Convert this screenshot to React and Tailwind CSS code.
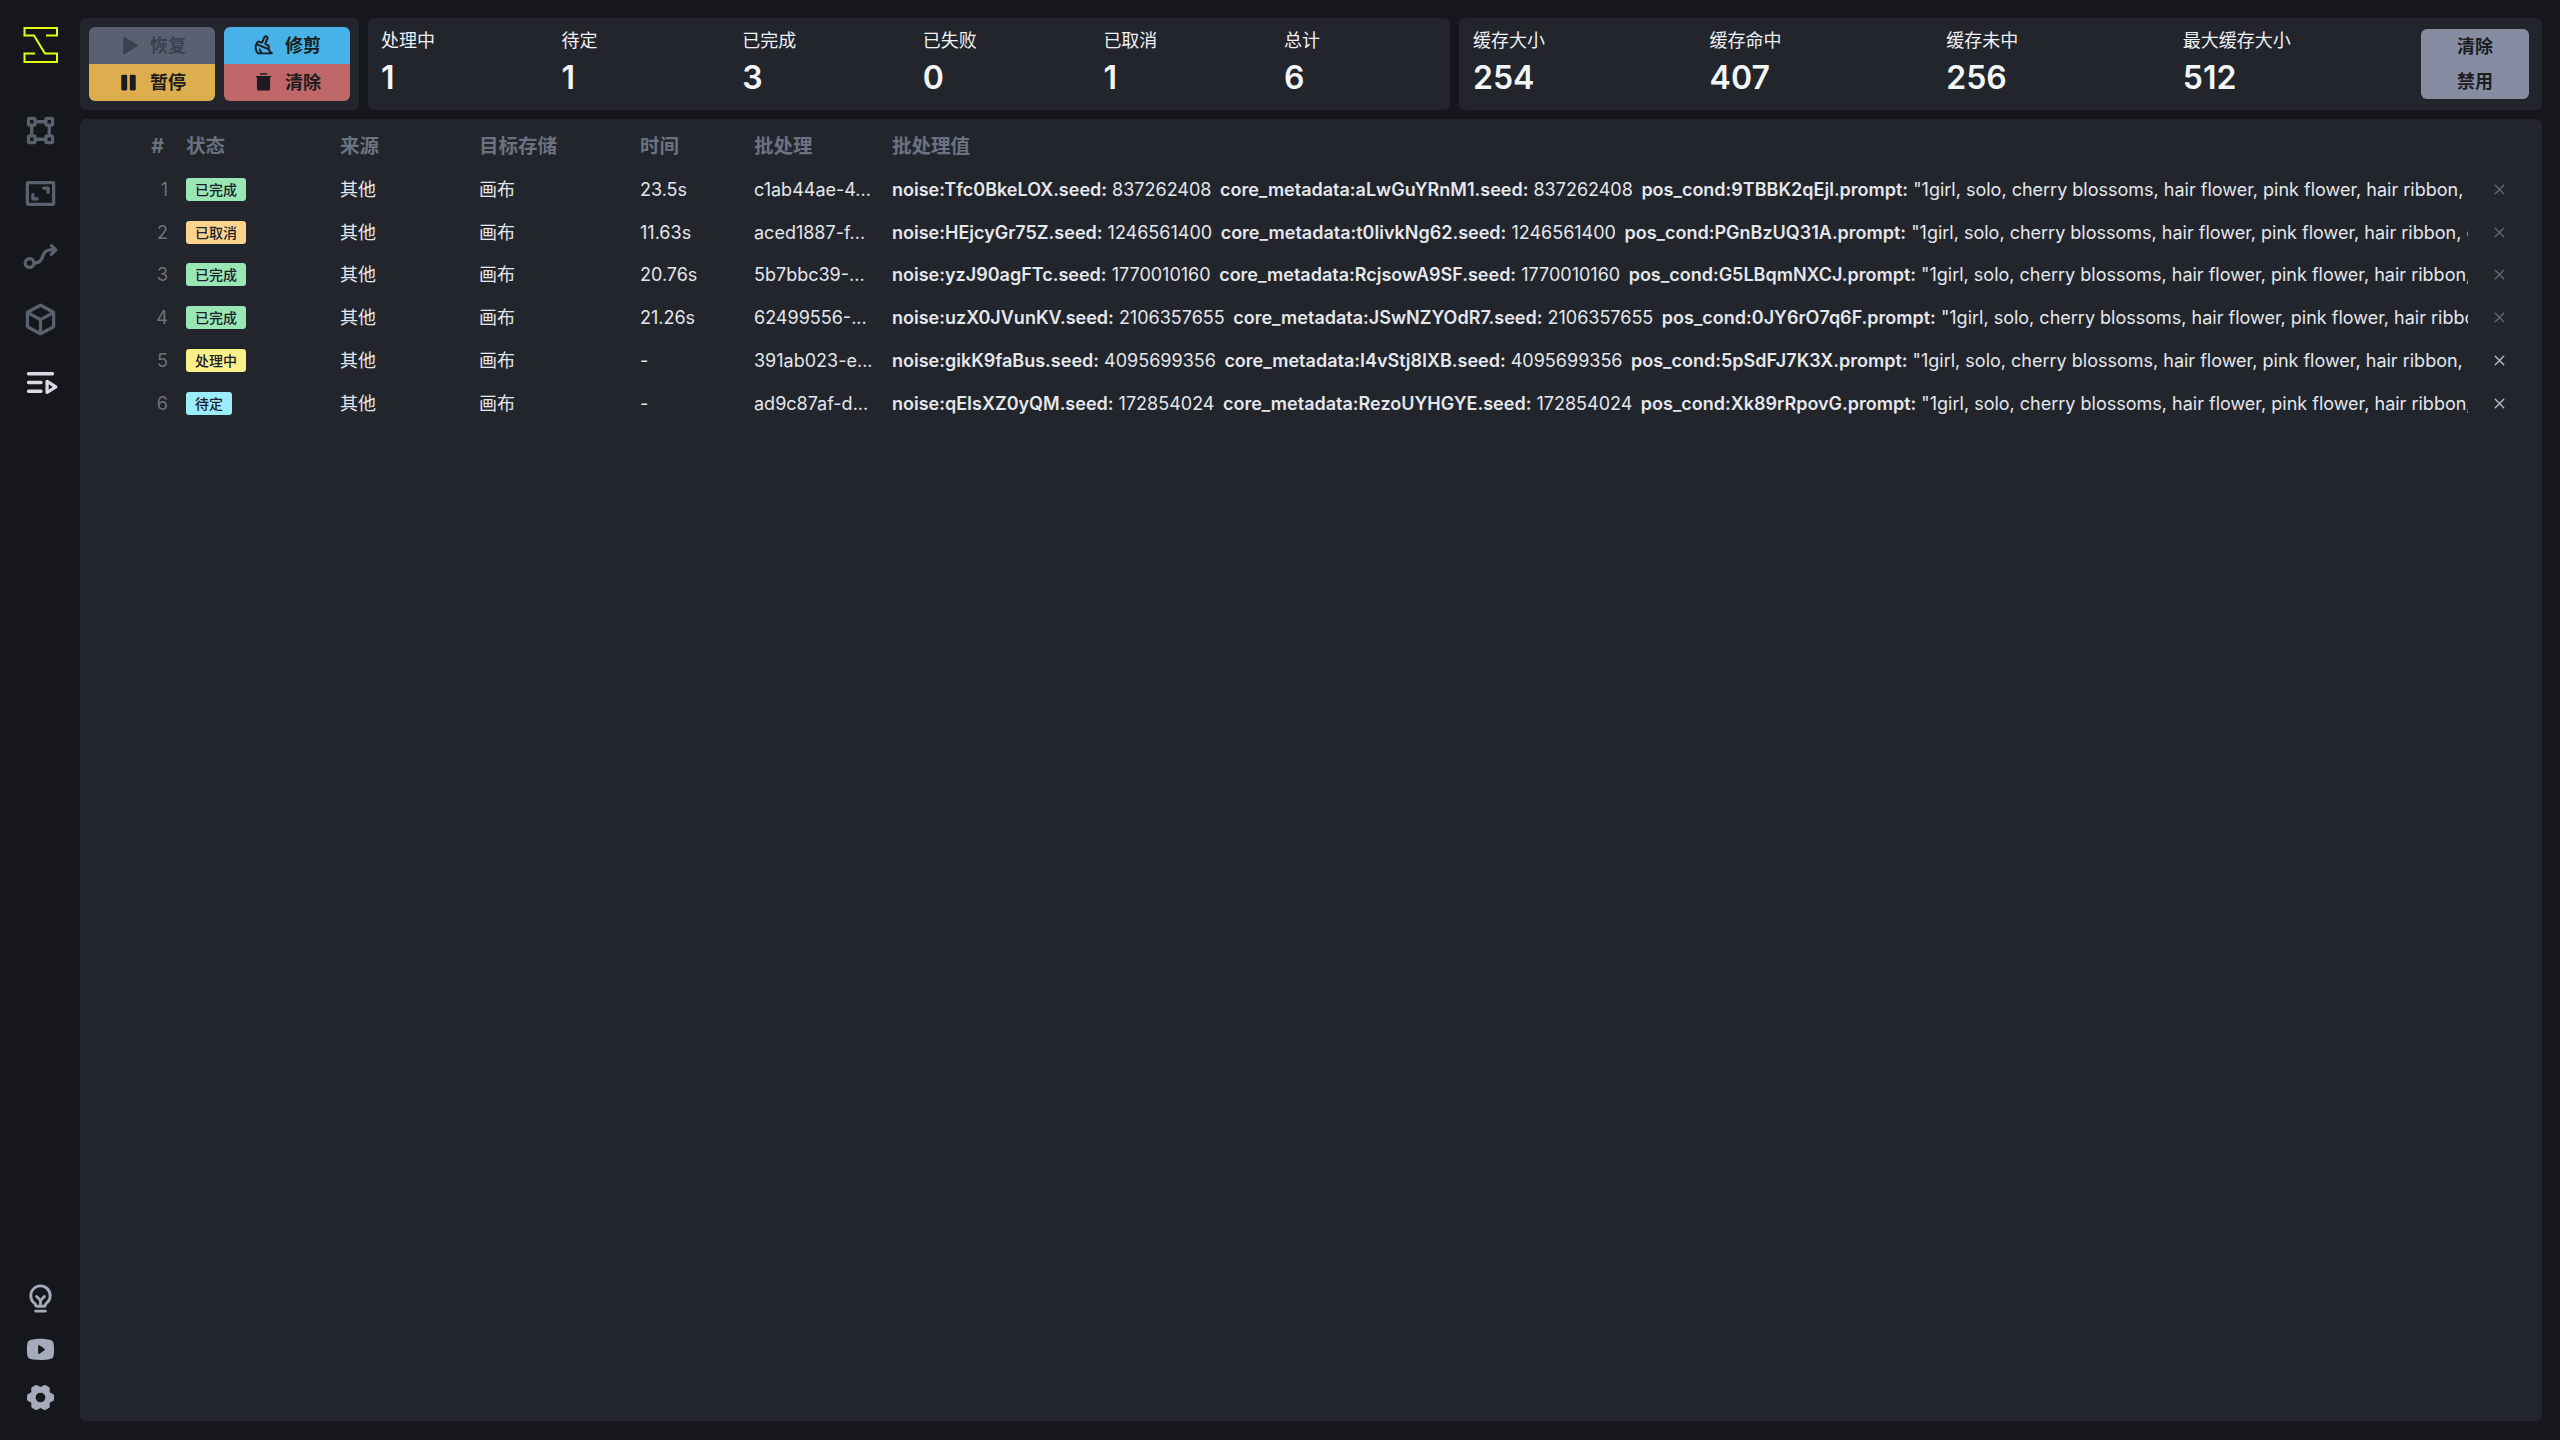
import React from 'react'
import {
  PiBoundingBoxBold,
  PiFrameCornersBold,
  PiFlowArrowBold,
  PiCubeBold,
  PiQueueBold,
  PiLightbulbFilamentBold,
  PiYoutubeLogoFill,
  PiGearSixFill,
  PiPlayFill,
  PiPauseFill,
  PiBroomBold,
  PiTrashSimpleFill,
  PiXBold,
} from 'react-icons/pi'

const PROMPT = '"1girl, solo, cherry blossoms, hair flower, pink flower, hair ribbon, closed eyes, kimono, outdoors, smile"'

const QUEUE_STATS = [
  { label: '处理中', value: 1 },
  { label: '待定', value: 1 },
  { label: '已完成', value: 3 },
  { label: '已失败', value: 0 },
  { label: '已取消', value: 1 },
  { label: '总计', value: 6 },
]

const CACHE_STATS = [
  { label: '缓存大小', value: 254 },
  { label: '缓存命中', value: 407 },
  { label: '缓存未中', value: 256 },
  { label: '最大缓存大小', value: 512 },
]

const STATUS = {
  done: { label: '已完成', className: 'bg-[#9ae6b4]' },
  canceled: { label: '已取消', className: 'bg-[#fbd38d]' },
  running: { label: '处理中', className: 'bg-[#faf089]' },
  pending: { label: '待定', className: 'bg-[#9decf9]' },
}

const ROWS = [
  { id: 1, status: 'done', time: '23.5s', batch: 'c1ab44ae-4...', noise: 'noise:Tfc0BkeLOX.seed:', meta: 'core_metadata:aLwGuYRnM1.seed:', seed: '837262408', pos: 'pos_cond:9TBBK2qEjl.prompt:' },
  { id: 2, status: 'canceled', time: '11.63s', batch: 'aced1887-f...', noise: 'noise:HEjcyGr75Z.seed:', meta: 'core_metadata:t0livkNg62.seed:', seed: '1246561400', pos: 'pos_cond:PGnBzUQ31A.prompt:' },
  { id: 3, status: 'done', time: '20.76s', batch: '5b7bbc39-...', noise: 'noise:yzJ90agFTc.seed:', meta: 'core_metadata:RcjsowA9SF.seed:', seed: '1770010160', pos: 'pos_cond:G5LBqmNXCJ.prompt:' },
  { id: 4, status: 'done', time: '21.26s', batch: '62499556-...', noise: 'noise:uzX0JVunKV.seed:', meta: 'core_metadata:JSwNZYOdR7.seed:', seed: '2106357655', pos: 'pos_cond:0JY6rO7q6F.prompt:' },
  { id: 5, status: 'running', time: '-', batch: '391ab023-e...', noise: 'noise:gikK9faBus.seed:', meta: 'core_metadata:I4vStj8IXB.seed:', seed: '4095699356', pos: 'pos_cond:5pSdFJ7K3X.prompt:', active: true },
  { id: 6, status: 'pending', time: '-', batch: 'ad9c87af-d...', noise: 'noise:qEIsXZ0yQM.seed:', meta: 'core_metadata:RezoUYHGYE.seed:', seed: '172854024', pos: 'pos_cond:Xk89rRpovG.prompt:', active: true },
]

function Logo() {
  return (
    <svg width="40" height="40" viewBox="0 0 40 40" fill="none" stroke="#e6fd13" strokeWidth="2">
      <path d="M15 28.5H4.5V37H37V28.5H25L14 10.5H4.5V3H37V10.5H26" />
    </svg>
  )
}

function ActionButton({ icon: Icon, label, className }) {
  return (
    <button className={`flex h-[37px] w-[126px] items-center justify-center gap-[11px] text-[18px] font-semibold ${className}`}>
      <Icon className="text-[21px]" />
      {label}
    </button>
  )
}

function Stat({ label, value }) {
  return (
    <div>
      <div className="text-[18px] leading-[24px] text-[#f0f1f4]">{label}</div>
      <div className="mt-[5px] text-[32px] leading-[40px] font-semibold text-[#f4f5f7]">{value}</div>
    </div>
  )
}

function Row({ row }) {
  const status = STATUS[row.status]
  return (
    <div className="flex h-[42.8px] items-center text-[18px] text-[#e4e7ec]">
      <div className="w-[88px] text-right text-[#6b7280]">{row.id}</div>
      <div className="ml-[18px] flex w-[154px]">
        <span className={`rounded-[3px] px-[9px] text-[14px] leading-[23px] font-medium text-[#1a202c] ${status.className}`}>
          {status.label}
        </span>
      </div>
      <div className="w-[139px]">其他</div>
      <div className="w-[161px]">画布</div>
      <div className="w-[114px]">{row.time}</div>
      <div className="w-[138px]">{row.batch}</div>
      <div className="flex w-[1576px] gap-[8.5px] overflow-hidden whitespace-nowrap">
        <span><b className="font-semibold">{row.noise}</b> {row.seed}</span>
        <span><b className="font-semibold">{row.meta}</b> {row.seed}</span>
        <span><b className="font-semibold">{row.pos}</b> {PROMPT}</span>
      </div>
      <div className={`flex w-[62px] justify-center text-[15px] ${row.active ? 'text-[#b4b9c5]' : 'text-[#5f6675]'}`}>
        <PiXBold />
      </div>
    </div>
  )
}

export default function App() {
  return (
    <div className="flex h-[1440px] w-[2560px] overflow-hidden bg-[#16171c] font-[Inter,'Noto_Sans_CJK_SC',sans-serif]">
      {/* sidebar */}
      <aside className="flex w-[80px] flex-col items-center pt-[25px] pb-[27px]">
        <Logo />
        <div className="mt-[48px] flex flex-col items-center gap-[28px] text-[35px] text-[#59606e]">
          <PiBoundingBoxBold />
          <PiFrameCornersBold />
          <PiFlowArrowBold />
          <PiCubeBold />
          <PiQueueBold className="text-[#d8dbe2]" />
        </div>
        <div className="mt-auto flex flex-col items-center gap-[20px] text-[31px] text-[#a5abba]">
          <PiLightbulbFilamentBold />
          <PiYoutubeLogoFill />
          <PiGearSixFill className="-mt-[3px]" />
        </div>
      </aside>

      <main className="flex w-[2462px] flex-col gap-[9px] pt-[18px] pb-[19px]">
        <div className="flex h-[92px] gap-[9px]">
          {/* queue controls */}
          <div className="flex w-[279px] gap-[9px] rounded-[6px] bg-[#22252c] p-[9px]">
            <div className="overflow-hidden rounded-[6px]">
              <ActionButton icon={PiPlayFill} label="恢复" className="bg-[#596072] text-[#3c4150]" />
              <ActionButton icon={PiPauseFill} label="暂停" className="bg-[#dcae4d] text-[#1a1c20]" />
            </div>
            <div className="overflow-hidden rounded-[6px]">
              <ActionButton icon={PiBroomBold} label="修剪" className="bg-[#47b1e8] text-[#1a1c20]" />
              <ActionButton icon={PiTrashSimpleFill} label="清除" className="bg-[#c06869] text-[#1a1c20]" />
            </div>
          </div>

          {/* queue status */}
          <div className="grid w-[1082px] grid-cols-[repeat(6,180.6px)] rounded-[6px] bg-[#22252c] py-[11px] pl-[13px]">
            {QUEUE_STATS.map((stat) => <Stat key={stat.label} {...stat} />)}
          </div>

          {/* model cache */}
          <div className="flex w-[1083px] rounded-[6px] bg-[#22252c] py-[11px] pl-[14px]">
            <div className="grid flex-1 grid-cols-[repeat(4,236.6px)]">
              {CACHE_STATS.map((stat) => <Stat key={stat.label} {...stat} />)}
            </div>
            <div className="mr-[13px] flex w-[108px] flex-col items-center justify-center gap-[8px] rounded-[6px] bg-[#868da3] text-[18px] leading-[27px] font-semibold text-[#1a1c20]">
              <span>清除</span>
              <span>禁用</span>
            </div>
          </div>
        </div>

        {/* queue list */}
        <div className="min-h-0 flex-1 rounded-[6px] bg-[#22252c]">
          <div className="flex h-[49px] items-center pt-[7px] text-[19.5px] font-bold text-[#6b7280]">
            <div className="w-[84px] text-right">#</div>
            <div className="ml-[22px] w-[154px]">状态</div>
            <div className="w-[139px]">来源</div>
            <div className="w-[161px]">目标存储</div>
            <div className="w-[114px]">时间</div>
            <div className="w-[138px]">批处理</div>
            <div>批处理值</div>
          </div>
          {ROWS.map((row) => <Row key={row.id} row={row} />)}
        </div>
      </main>
    </div>
  )
}
